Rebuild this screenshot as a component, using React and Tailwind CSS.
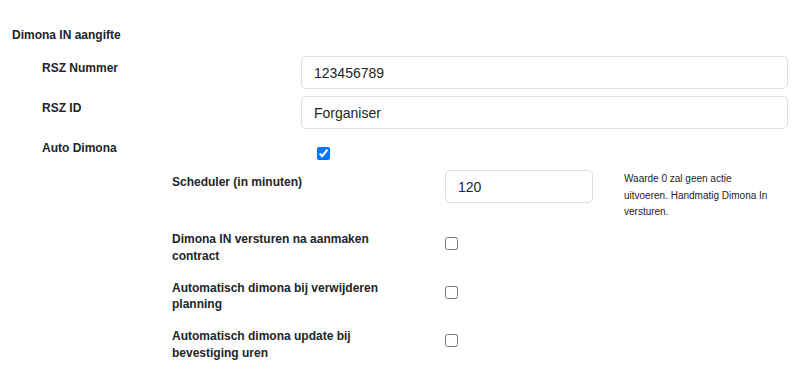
export default function App() {
  return (
    <div className="min-h-[370px] bg-white pt-[27px] pl-3 pr-[5px] text-[#212529] font-['Liberation_Sans',Arial,sans-serif]">
      <h3 className="text-[12px] font-bold leading-[17px]">Dimona IN aangifte</h3>

      <div className="mt-3 pl-[30px]">
        <FieldRow label="RSZ Nummer" value="123456789" />
        <FieldRow label="RSZ ID" value="Forganiser" className="mt-[7px]" />

        <div className="mt-[7px] flex items-start">
          <label className="w-[259px] shrink-0 pt-[4px] text-[12px] font-bold leading-[16.7px]">Auto Dimona</label>
          <input type="checkbox" defaultChecked className="m-0 ml-[16px] mt-[11px] h-[13px] w-[13px]" />
        </div>

        <div className="pl-[130px]">
          <div className="mt-[10px] flex items-start">
            <label className="w-[273px] shrink-0 pt-[4px] text-[12px] font-bold leading-[16.7px]">
              Scheduler (in minuten)
            </label>
            <input
              type="text"
              defaultValue="120"
              className="h-[33px] w-[148px] rounded-[5px] border border-[#dadde1] px-3 text-[14px] text-[#212529] outline-none"
            />
            <p className="ml-[31px] mt-[1px] w-[150px] text-[10px] leading-[16.7px]">
              Waarde 0 zal geen actie uitvoeren. Handmatig Dimona In versturen.
            </p>
          </div>

          <CheckRow label="Dimona IN versturen na aanmaken contract" className="mt-[10px]" />
          <CheckRow label="Automatisch dimona bij verwijderen planning" className="mt-[15px]" />
          <CheckRow label="Automatisch dimona update bij bevestiging uren" className="mt-[15px]" />
        </div>
      </div>
    </div>
  );
}

function FieldRow({ label, value, className = '' }) {
  return (
    <div className={`flex items-start ${className}`}>
      <label className="w-[259px] shrink-0 pt-[4px] text-[12px] font-bold leading-[16.7px]">{label}</label>
      <input
        type="text"
        defaultValue={value}
        className="h-[33px] flex-1 rounded-[5px] border border-[#dadde1] px-3 text-[14px] text-[#212529] outline-none"
      />
    </div>
  );
}

function CheckRow({ label, className = '' }) {
  return (
    <div className={`flex items-start ${className}`}>
      <div className="w-[273px] shrink-0 pr-[40px]">
        <label className="block text-[12px] font-bold leading-[16.7px]">{label}</label>
      </div>
      <input type="checkbox" className="m-0 mt-[6px] h-[13px] w-[13px]" />
    </div>
  );
}
